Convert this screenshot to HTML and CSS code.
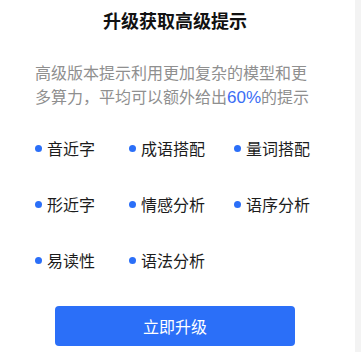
FILE: index.html
```html
<!DOCTYPE html>
<html lang="zh">
<head>
<meta charset="utf-8">
<link rel="stylesheet" href="styles.css">
</head>
<body>
<div class="page">
  <div class="panel">
    <h1 class="title">升级获取高级提示</h1>
    <p class="desc">高级版本提示利用更加复杂的模型和更多算力，平均可以额外给出<span class="hl">60%</span>的提示</p>
    <ul class="features">
      <li class="feat"><span class="dot"></span>音近字</li>
      <li class="feat"><span class="dot"></span>成语搭配</li>
      <li class="feat"><span class="dot"></span>量词搭配</li>
      <li class="feat"><span class="dot"></span>形近字</li>
      <li class="feat"><span class="dot"></span>情感分析</li>
      <li class="feat"><span class="dot"></span>语序分析</li>
      <li class="feat"><span class="dot"></span>易读性</li>
      <li class="feat"><span class="dot"></span>语法分析</li>
    </ul>
    <div class="actions"><button class="btn">立即升级</button></div>
  </div>
  <div class="strip"></div>
</div>
</body>
</html>
```

FILE: styles.css
```css
html, body {
  margin: 0;
  padding: 0;
  background: #ffffff;
}
body {
  font-family: "Noto Sans CJK SC", "Noto Sans", sans-serif;
}
.page {
  display: flex;
  width: 361px;
  height: 352px;
  overflow: hidden;
}
.panel {
  width: 355px;
  box-sizing: border-box;
  padding: 8px 40px 0 35px;
  background: #ffffff;
}
.strip {
  flex: 1;
  background: #f3f3f3;
}
.title {
  margin: 0;
  font-size: 18px;
  line-height: 24px;
  font-weight: 700;
  color: #111111;
  text-align: center;
}
.desc {
  margin: 28px 0 0;
  font-size: 16px;
  line-height: 24px;
  height: 48px;
  color: #8f8f8f;
}
.hl {
  color: #3b6df5;
  font-family: "Liberation Sans", "Noto Sans CJK SC", sans-serif;
  font-size: 17px;
  line-height: 1;
}
.features {
  list-style: none;
  margin: 28px 0 0;
  padding: 0;
  display: grid;
  grid-template-columns: 94px 105px auto;
  row-gap: 32px;
}
.feat {
  display: flex;
  align-items: center;
  font-size: 16px;
  line-height: 24px;
  color: #1c1c1c;
}
.dot {
  width: 7px;
  height: 7px;
  border-radius: 50%;
  background: #2b6ff8;
  margin-right: 5px;
  flex: none;
}
.actions {
  margin-top: 34px;
  display: flex;
  justify-content: center;
}
.btn {
  width: 240px;
  height: 40px;
  border: none;
  border-radius: 4px;
  background: #2b6ff8;
  color: #ffffff;
  font-family: "Noto Sans CJK SC", "Noto Sans", sans-serif;
  font-size: 16px;
  padding: 0;
}
```
